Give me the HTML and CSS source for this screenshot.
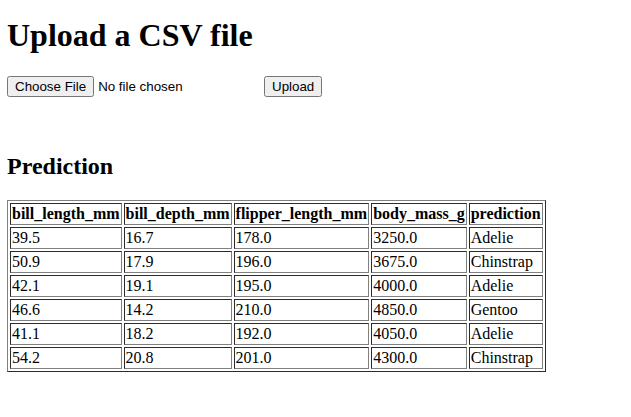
FILE: index.html
```html
<!DOCTYPE html>
<html>
<head>
<meta charset="utf-8">
<title>Upload</title>
<link rel="stylesheet" href="styles.css">
</head>
<body class="page">
<h1 class="title">Upload a CSV file</h1>
<form class="upload-form">
<input type="file" name="file" class="file-input">
<input type="submit" value="Upload" class="upload-btn">
</form>
<br><br>
<h2 class="subtitle">Prediction</h2>
<table class="data-table">
<tr><th>bill_length_mm</th><th>bill_depth_mm</th><th>flipper_length_mm</th><th>body_mass_g</th><th>prediction</th></tr>
<tr><td>39.5</td><td>16.7</td><td>178.0</td><td>3250.0</td><td>Adelie</td></tr>
<tr><td>50.9</td><td>17.9</td><td>196.0</td><td>3675.0</td><td>Chinstrap</td></tr>
<tr><td>42.1</td><td>19.1</td><td>195.0</td><td>4000.0</td><td>Adelie</td></tr>
<tr><td>46.6</td><td>14.2</td><td>210.0</td><td>4850.0</td><td>Gentoo</td></tr>
<tr><td>41.1</td><td>18.2</td><td>192.0</td><td>4050.0</td><td>Adelie</td></tr>
<tr><td>54.2</td><td>20.8</td><td>201.0</td><td>4300.0</td><td>Chinstrap</td></tr>
</table>
</body>
</html>
```

FILE: styles.css
```css
.page {
  font-family: "Liberation Serif", "Times New Roman", serif;
  margin: 7px;
}
.title {
  margin-top: 10.44px;
}
.data-table {
  border: 1px outset #808080;
}
.data-table th,
.data-table td {
  border: 1px inset #808080;
  text-align: left;
}
```
